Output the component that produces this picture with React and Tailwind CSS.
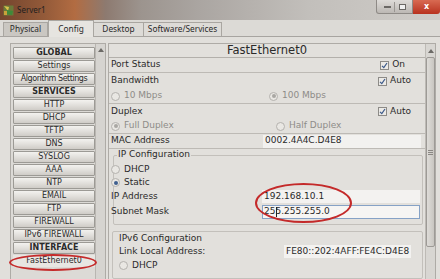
import React from "react";

function Btn({ children, bold, tight }) {
  return (
    <div
      className={
        "h-[12px] flex items-center justify-center rounded-[1px] border border-[#9c9a95] bg-[linear-gradient(180deg,#f3f2ef_0%,#e2e0dc_50%,#cfccc7_100%)] leading-none text-[#2b2b2b] whitespace-nowrap " +
        (bold ? "font-bold text-[8px] " : "text-[8px] ") +
        (tight ? "tracking-[-0.45px] " : "")
      }
    >
      {children}
    </div>
  );
}

function Check({ label }) {
  return (
    <div className="flex items-center gap-[3px]">
      <div className="w-[9px] h-[9px] border border-[#8d8b87] bg-[#eceae6] flex items-center justify-center">
        <svg width="7" height="7" viewBox="0 0 7 7">
          <path d="M1 3.8 L2.8 5.6 L6 1" stroke="#3c5a8a" strokeWidth="1.2" fill="none" />
        </svg>
      </div>
      <span>{label}</span>
    </div>
  );
}

function Radio({ label, checked, disabled, blue }) {
  return (
    <div className={"flex items-center gap-[4px] " + (disabled ? "text-[#8e8c88]" : "text-[#2a2a2a]")}>
      <div className="w-[9px] h-[9px] rounded-full border border-[#b4b2ae] bg-[#e9e7e3] flex items-center justify-center">
        {checked && (
          <div className={"w-[4px] h-[4px] rounded-full " + (blue ? "bg-[#3f5f8f]" : "bg-[#a9a7a3]")} />
        )}
      </div>
      <span>{label}</span>
    </div>
  );
}

export default function App() {
  return (
    <div className="w-[440px] h-[279px] overflow-hidden bg-[#d9d7d3] text-[#2a2a2a] font-['DejaVu_Sans',sans-serif] flex flex-col relative">
      {/* Title bar */}
      <div className="h-[20px] flex items-start bg-[linear-gradient(90deg,#74452e_0%,#935a39_10%,#b26c42_17%,#8d7a70_24%,#9c948e_32%,#aaa5a1_45%,#c2bfbb_70%,#cfccc8_100%)]">
        <div className="flex items-center h-[20px] pl-[3px] gap-[3px]">
          <svg width="11" height="11" viewBox="0 0 11 11">
            <rect x="0.5" y="0.5" width="10" height="10" fill="#6a7a3a" />
            <path d="M1 1 L6 2 L5 6 Z" fill="#d9c24a" />
            <path d="M4 5 L10 6 L9 10 L3 9 Z" fill="#3f8a3a" />
            <rect x="1" y="6" width="3" height="4" fill="#c9a23a" />
          </svg>
          <span className="text-[8px] font-['Noto_Sans',sans-serif] text-[#1e1e1e]">Server1</span>
        </div>
        <div className="ml-auto flex h-[14px]">
          <div className="w-[37px] h-[14px] rounded-bl-[3px] border border-t-0 border-[#8e8a86] bg-[linear-gradient(180deg,#dedbd8,#bcb8b4)] flex items-center justify-around px-[3px]">
            <div className="w-[14px] h-[8px] flex items-center justify-center">
              <div className="w-[7px] h-[2px] bg-[#f4f4f4] border border-[#6b6865]" />
            </div>
            <div className="w-[1px] h-[10px] bg-[#9a9692]" />
            <div className="w-[14px] h-[8px] flex items-center justify-center">
              <div className="w-[7px] h-[6px] border border-[#6b6865] bg-[#f0f0f0]" />
            </div>
          </div>
          <div className="w-[27px] h-[14px] rounded-br-[3px] bg-[linear-gradient(180deg,#d86a52,#b8321f)] flex items-center justify-center">
            <span className="text-white text-[8px] font-bold leading-none">x</span>
          </div>
        </div>
      </div>

      {/* Tabs */}
      <div className="h-[17px] flex items-end pl-[3px] border-b border-[#a7a4a0] font-['Noto_Sans',sans-serif] text-[8.3px] bg-[#dcdad6]">
        <div className="h-[14px] w-[45px] flex items-center justify-center border border-b-0 border-[#a9a6a1] bg-[#cac7c2]">Physical</div>
        <div className="h-[17px] w-[46px] flex items-center justify-center border border-b-0 border-[#a9a6a1] bg-[#e6e4e0] -mb-[1px]">Config</div>
        <div className="h-[14px] w-[50px] flex items-center justify-center border border-b-0 border-l-0 border-[#a9a6a1] bg-[#dddbd7]">Desktop</div>
        <div className="h-[14px] w-[78px] flex items-center justify-center border border-b-0 border-l-0 border-[#a9a6a1] bg-[#dddbd7]">Software/Services</div>
      </div>

      {/* Body */}
      <div className="flex-1 flex pl-[10px] pt-[6px] gap-[2px] bg-[#e1dfdb]">
        {/* Left list */}
        <div className="w-[96px] h-[250px] flex border border-[#aeaba6] bg-[#dcdad6]">
          <div className="w-[84px] pl-[2px] pt-[3px] flex flex-col gap-[1px]">
            <Btn bold>GLOBAL</Btn>
            <Btn>Settings</Btn>
            <Btn tight>Algorithm Settings</Btn>
            <Btn bold>SERVICES</Btn>
            <Btn>HTTP</Btn>
            <Btn>DHCP</Btn>
            <Btn>TFTP</Btn>
            <Btn>DNS</Btn>
            <Btn>SYSLOG</Btn>
            <Btn>AAA</Btn>
            <Btn>NTP</Btn>
            <Btn>EMAIL</Btn>
            <Btn>FTP</Btn>
            <Btn>FIREWALL</Btn>
            <Btn>IPv6 FIREWALL</Btn>
            <Btn bold>INTERFACE</Btn>
            <div className="h-[12px] flex items-center justify-center text-[8px] leading-none bg-[#e8e6e2]">FastEthernet0</div>
          </div>
          <div className="flex-1 border-l border-[#b9b6b1] bg-[#d6d4d0] flex justify-center pt-[4px]">
            <svg width="6" height="4" viewBox="0 0 6 4">
              <path d="M0 4 L3 0 L6 4 Z" fill="#6c6a66" />
            </svg>
          </div>
        </div>

        {/* Right panel */}
        <div className="w-[328px] h-[250px] flex border border-[#aeaba6] bg-[#e2e0dc] text-[9px]">
          <div className="w-[316px] flex flex-col">
            <div className="h-[14px] flex items-center justify-center border-b border-[#b3b0ab] text-[11.5px] leading-none">FastEthernet0</div>
            {/* Port status */}
            <div className="h-[15px] flex items-center pl-[2px] pr-[20px] border-b border-[#bdbab5]">
              <span>Port Status</span>
              <div className="ml-auto"><Check label="On" /></div>
            </div>
            {/* Bandwidth */}
            <div className="h-[16px] flex items-center pl-[2px] pr-[14px]">
              <span>Bandwidth</span>
              <div className="ml-auto"><Check label="Auto" /></div>
            </div>
            <div className="h-[15px] flex items-center pl-[2px] border-b border-[#bdbab5]">
              <div className="w-[158px]"><Radio label="10 Mbps" disabled /></div>
              <Radio label="100 Mbps" disabled checked />
            </div>
            {/* Duplex */}
            <div className="h-[15px] flex items-center pl-[2px] pr-[14px]">
              <span>Duplex</span>
              <div className="ml-auto"><Check label="Auto" /></div>
            </div>
            <div className="h-[15px] flex items-center pl-[2px] border-b border-[#bdbab5]">
              <div className="w-[165px]"><Radio label="Full Duplex" disabled checked /></div>
              <Radio label="Half Duplex" disabled />
            </div>
            {/* MAC */}
            <div className="h-[15px] flex items-center pl-[2px] border-b border-[#bdbab5]">
              <span className="w-[152px]">MAC Address</span>
              <div className="w-[158px] h-[13px] bg-[#f2f1ef] flex items-center pl-[2px]">0002.4A4C.D4E8</div>
            </div>
            {/* IP configuration group */}
            <div className="relative mt-[6px] ml-[4px] mr-[2px] h-[70px] border border-[#c3c0bb] rounded-[2px] flex flex-col">
              <div className="absolute -top-[6px] left-[3px] px-[1px] bg-[#e2e0dc] leading-none">IP Configuration</div>
              <div className="h-[7px]" />
              <div className="h-[13px] flex items-center -ml-[3px]"><Radio label="DHCP" /></div>
              <div className="h-[13px] flex items-center -ml-[3px]"><Radio label="Static" checked blue /></div>
              <div className="h-[15px] flex items-center -ml-[3px]">
                <span className="w-[151px]">IP Address</span>
                <div className="w-[158px] h-[13px] bg-[#f3f2f0] flex items-center pl-[2px]">192.168.10.1</div>
              </div>
              <div className="h-[15px] flex items-center -ml-[3px]">
                <span className="w-[151px]">Subnet Mask</span>
                <div className="w-[158px] h-[14px] bg-[#f6f5f3] border border-[#86a2c6] flex items-center pl-[1px] relative">
                  255.255.255.0
                  <div className="absolute left-[13px] top-[1px] w-[1px] h-[10px] bg-[#222]" />
                </div>
              </div>
            </div>
            {/* IPv6 group */}
            <div className="relative mt-[6px] ml-[3px] mr-[2px] h-[48px] border border-[#c3c0bb] rounded-[2px] flex flex-col">
              <div className="h-[13px] flex items-center pl-[6px]">IPv6 Configuration</div>
              <div className="h-[13px] flex items-center pl-[6px]">
                <span className="w-[165px]">Link Local Address:</span>
                <div className="h-[13px] px-[2px] bg-[#f3f2f0] flex items-center">FE80::202:4AFF:FE4C:D4E8</div>
              </div>
              <div className="h-[15px] flex items-center pl-[6px]"><Radio label="DHCP" /></div>
            </div>
          </div>
          {/* scrollbar */}
          <div className="flex-1 border-l border-[#bdbab5] bg-[#d8d6d2] flex flex-col items-center pt-[5px]">
            <svg width="6" height="4" viewBox="0 0 6 4">
              <path d="M0 4 L3 0 L6 4 Z" fill="#6c6a66" />
            </svg>
            <div className="mt-[4px] w-[9px] h-[190px] rounded-[2px] border border-[#9d9a96] bg-[linear-gradient(90deg,#dedcd8,#c9c6c1)] flex flex-col items-center justify-center gap-[1px]">
              <div className="w-[5px] h-[1px] bg-[#8a8783]" />
              <div className="w-[5px] h-[1px] bg-[#8a8783]" />
              <div className="w-[5px] h-[1px] bg-[#8a8783]" />
            </div>
          </div>
        </div>
      </div>

      {/* Red annotation ellipses */}
      <div className="absolute left-[255px] top-[183px] w-[97px] h-[40px] rounded-[50%] border-2 border-[#c42a2a]" />
      <div className="absolute left-[9px] top-[254px] w-[88px] h-[17px] rounded-[50%] border-2 border-[#c42a2a]" />
    </div>
  );
}
